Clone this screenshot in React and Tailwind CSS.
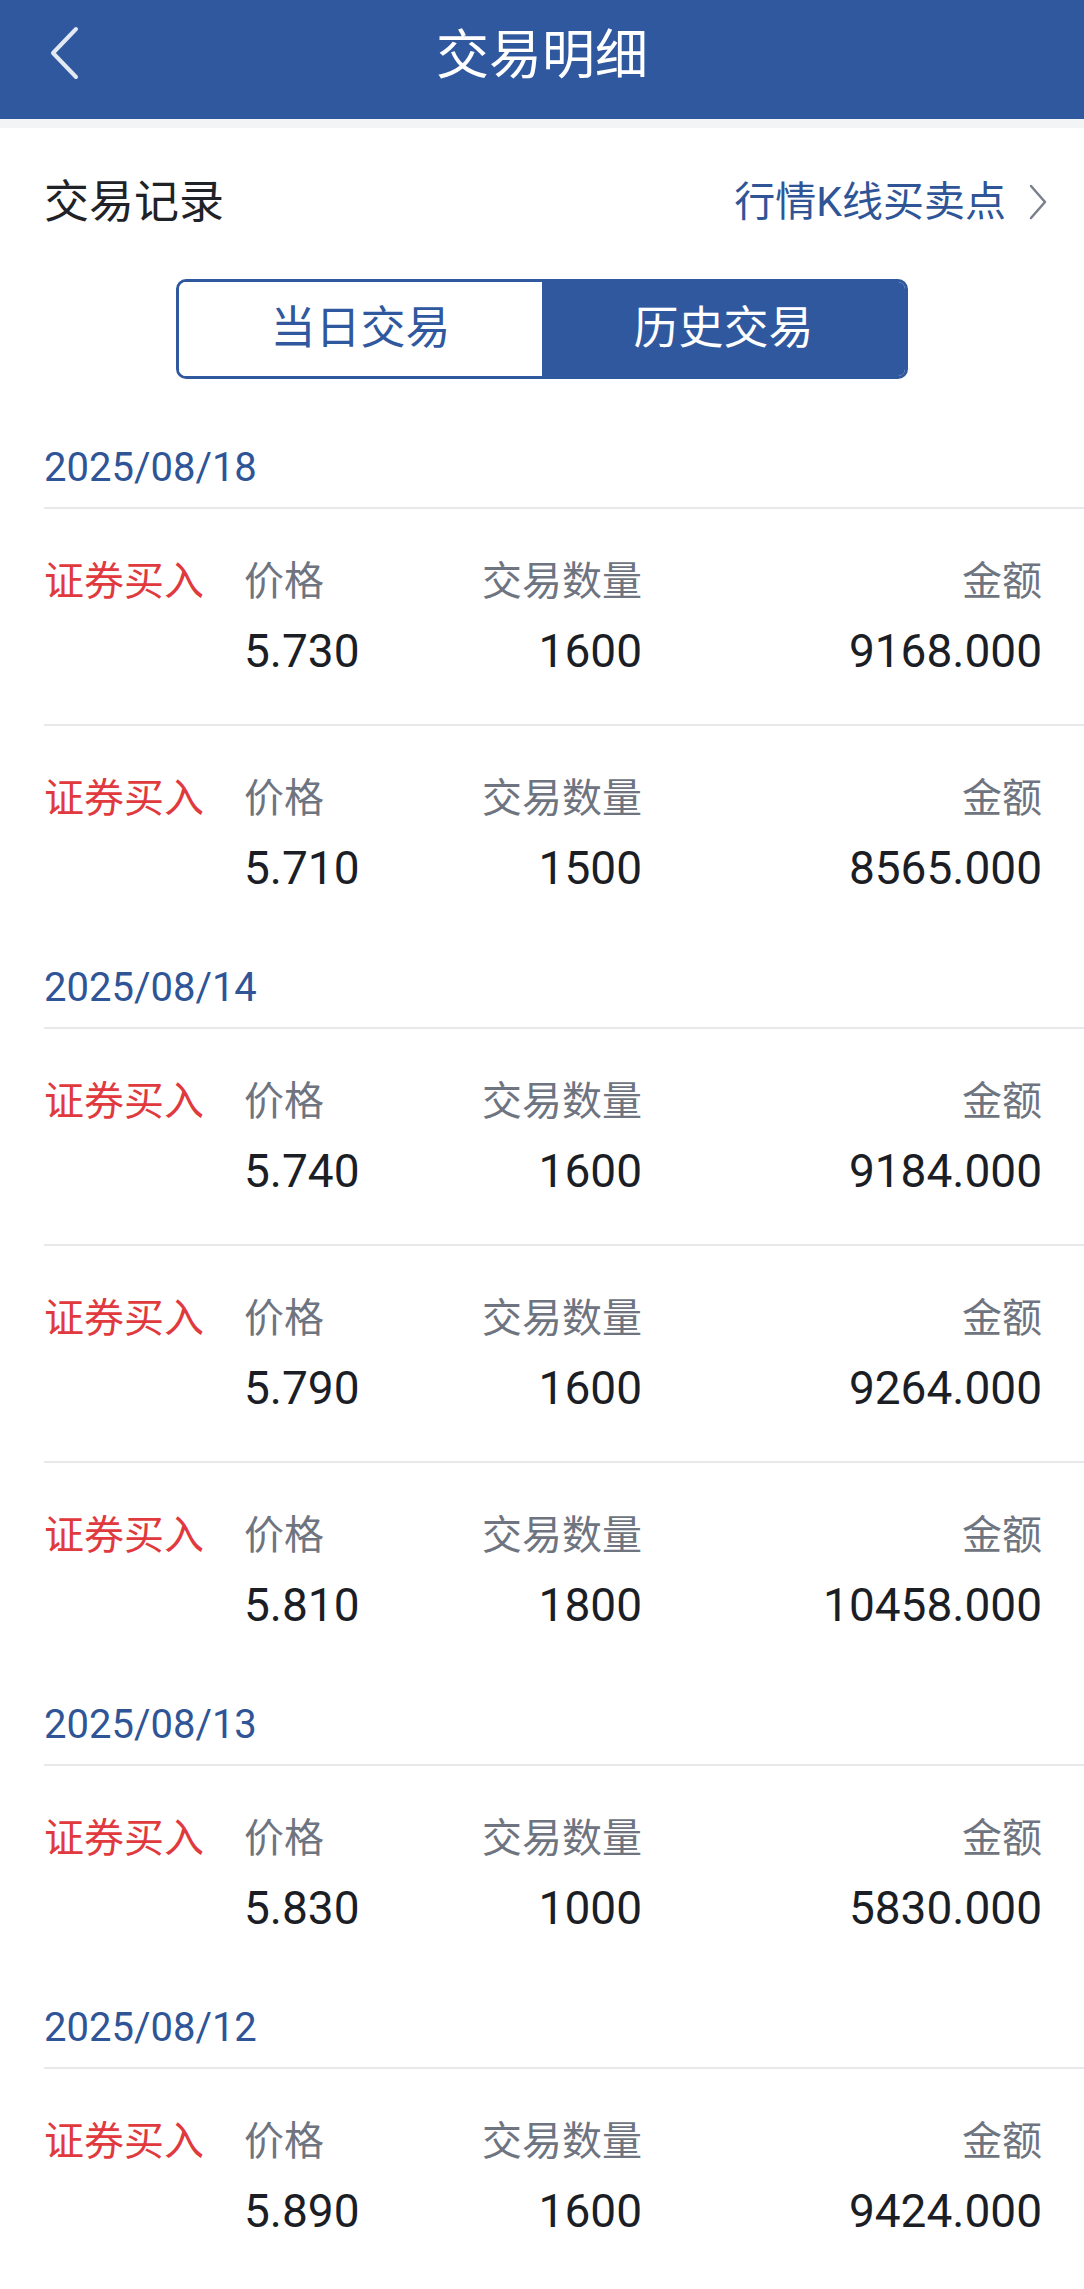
import React from "react";

const groups = [
  {
    date: "2025/08/18",
    rows: [
      { price: "5.730", qty: "1600", amount: "9168.000" },
      { price: "5.710", qty: "1500", amount: "8565.000" },
    ],
  },
  {
    date: "2025/08/14",
    rows: [
      { price: "5.740", qty: "1600", amount: "9184.000" },
      { price: "5.790", qty: "1600", amount: "9264.000" },
      { price: "5.810", qty: "1800", amount: "10458.000" },
    ],
  },
  {
    date: "2025/08/13",
    rows: [{ price: "5.830", qty: "1000", amount: "5830.000" }],
  },
  {
    date: "2025/08/12",
    rows: [{ price: "5.890", qty: "1600", amount: "9424.000" }],
  },
];

const font = "font-['Roboto','Noto_Sans_CJK_SC',sans-serif]";

function TradeRow({ row }) {
  return (
    <div className="ml-[44px] border-t-2 border-[#e8e9eb] pt-[45px] pb-[43px] pr-[42px]">
      <div className="grid grid-cols-[200px_200px_198px_1fr] h-[56px] items-center text-[40px] leading-[56px]">
        <span className="text-[#e0393e]">证券买入</span>
        <span className="text-[#6e7480]">价格</span>
        <span className="text-[#6e7480] text-right">交易数量</span>
        <span className="text-[#6e7480] text-right">金额</span>
      </div>
      <div className="mt-[11px] grid grid-cols-[200px_200px_198px_1fr] h-[60px] items-center text-[46px] leading-[60px] text-[#1b1e25]">
        <span></span>
        <span>{row.price}</span>
        <span className="text-right">{row.qty}</span>
        <span className="text-right">{row.amount}</span>
      </div>
    </div>
  );
}

export default function App() {
  return (
    <div className={`w-[1084px] min-h-[2289px] bg-white ${font}`}>
      <div className="h-[119px] bg-[#30589e] flex items-center justify-center relative">
        <svg
          className="absolute left-[46px] top-[26px]"
          width="34"
          height="54"
          viewBox="0 0 34 54"
          fill="none"
        >
          <polyline
            points="30,3 7,27 30,51"
            stroke="#e3e9f3"
            strokeWidth="4"
            strokeLinecap="round"
            strokeLinejoin="round"
          />
        </svg>
        <span className="text-white text-[53px] leading-none pb-[6px]">交易明细</span>
      </div>
      <div className="h-[9px] bg-[#f2f4f5]"></div>

      <div className="flex items-center justify-between pl-[44px] pr-[36px] pt-[46px] h-[102px]">
        <span className="text-[45px] text-[#1f2226] leading-none">交易记录</span>
        <div className="flex items-center gap-[22px]">
          <span className="text-[41px] text-[#2f5597] leading-none">行情K线买卖点</span>
          <svg width="20" height="36" viewBox="0 0 20 36" fill="none">
            <polyline
              points="3,2 17,18 3,34"
              stroke="#7a808a"
              strokeWidth="2.5"
              strokeLinecap="round"
              strokeLinejoin="round"
            />
          </svg>
        </div>
      </div>

      <div className="flex justify-center mt-[49px]">
        <div className="flex w-[732px] h-[100px] border-[3px] border-[#30589e] rounded-[10px] overflow-hidden">
          <div className="flex-1 flex items-center justify-center text-[45px] text-[#30589e] bg-white">
            当日交易
          </div>
          <div className="flex-1 flex items-center justify-center text-[45px] text-white bg-[#30589e]">
            历史交易
          </div>
        </div>
      </div>

      <div className="mt-[42px]">
        {groups.map((g, gi) => (
          <div key={gi}>
            <div className="pl-[44px] pt-[23px] pb-[15px] h-[86px] text-[40px] leading-[48px] text-[#2f5597]">
              {g.date}
            </div>
            {g.rows.map((r, i) => (
              <TradeRow key={i} row={r} />
            ))}
          </div>
        ))}
      </div>
    </div>
  );
}
